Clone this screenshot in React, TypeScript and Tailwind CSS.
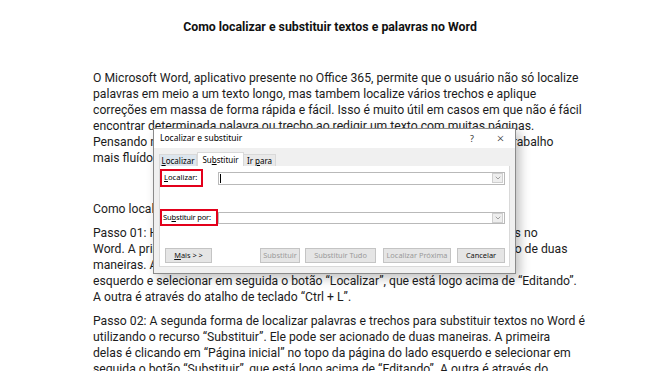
import { ChevronDown } from "lucide-react";

const p1 = [
  "O Microsoft Word, aplicativo presente no Office 365, permite que o usuário não só localize",
  "palavras em meio a um texto longo, mas tambem localize vários trechos e aplique",
  "correções em massa de forma rápida e fácil. Isso é muito útil em casos em que não é fácil",
  "encontrar determinada palavra ou trecho ao redigir um texto com muitas páginas.",
  "Pensando nisso, veja como localizar e substituir textos no Word e deixar seu trabalho",
  "mais fluído.",
];

const passo1 = [
  "Passo 01: Há duas formas de localizar palavras e trechos para substituir textos no",
  "Word. A primeira delas é utilizando o recurso “Localizar”. Ele pode ser acionado de duas",
  "maneiras. A primeira é clicando em “Página inicial” no topo da página do lado",
  "esquerdo e selecionar em seguida o botão “Localizar”, que está logo acima de “Editando”.",
  "A outra é através do atalho de teclado “Ctrl + L”.",
];

const passo2 = [
  "Passo 02: A segunda forma de localizar palavras e trechos para substituir textos no Word é",
  "utilizando o recurso “Substituir”. Ele pode ser acionado de duas maneiras. A primeira",
  "delas é clicando em “Página inicial” no topo da página do lado esquerdo e selecionar em",
  "seguida o botão “Substituir”, que está logo acima de “Editando”. A outra é através do",
];

const Lines = ({ lines }: { lines: string[] }) => (
  <p className="mb-2">
    {lines.map((l) => (
      <span key={l} className="block whitespace-nowrap">
        {l}
      </span>
    ))}
  </p>
);

const ComboBox = () => (
  <div className="flex h-full flex-1 items-center border border-[#b9b9b9] bg-white">
    <div className="flex-1" />
    <div className="mr-[1px] flex h-[10px] w-[11px] items-center justify-center border border-[#cfcfcf] bg-[#eeeeee] text-[#666]">
      <ChevronDown size={8} strokeWidth={1.75} />
    </div>
  </div>
);

const Btn = ({ children, off, w }: { children: React.ReactNode; off?: boolean; w: string }) => (
  <div
    className={`flex h-[15px] items-center justify-center whitespace-nowrap border border-[#c4c4c4] bg-[#e5e5e5] text-[7.4px] ${w} ${
      off ? "text-[#9a9a9a]" : "text-[#111]"
    }`}
  >
    {children}
  </div>
);

const Dialog = () => (
  <div
    className="absolute left-[153px] top-[128px] flex h-[146px] w-[363px] flex-col border border-[#8a8a8a] bg-[#f0f0f0] text-[7.6px] text-black shadow-[4px_4px_10px_rgba(0,0,0,0.25)]"
    style={{ fontFamily: '"Noto Sans", "Liberation Sans", sans-serif' }}
  >
    {/* title bar */}
    <div className="flex h-[19px] items-center bg-white pl-[6px] pr-[9px]">
      <span className="flex-1 text-[8.5px]">Localizar e substituir</span>
      <span className="w-[10px] text-center text-[9px] text-[#333]">?</span>
      <span className="ml-[18px] w-[11px] text-center text-[13px] font-light leading-none text-[#333]">×</span>
    </div>

    <div className="flex flex-1 flex-col px-[5px] pb-[6px] pt-[4px]">
      {/* tabs */}
      <div className="flex h-[14px] items-end whitespace-nowrap text-[8px]">
        <div className="flex h-[12px] w-[38px] items-center justify-center border border-b-0 border-[#d9d9d9] bg-[#dde6ee]">
          <span><u>L</u>ocalizar</span>
        </div>
        <div className="flex h-[14px] w-[47px] items-center justify-center border border-b-0 border-[#d9d9d9] bg-white">
          <span>Su<u>b</u>stituir</span>
        </div>
        <div className="flex h-[12px] w-[32px] items-center justify-center border border-b-0 border-l-0 border-[#d9d9d9] bg-[#e9e9e9]">
          <span>Ir <u>p</u>ara</span>
        </div>
      </div>

      {/* panel */}
      <div className="flex flex-1 flex-col border border-t-0 border-[#d9d9d9] bg-white pr-[4px] pt-[3px]">
        <div className="flex h-[18px] items-center">
          <div className="flex h-[18px] w-[43px] items-center whitespace-nowrap border-2 border-[#e3001b] pl-[2px]">
            <span><u>L</u>ocalizar:</span>
          </div>
          <div className="ml-[15px] flex h-[13px] flex-1">
            <div className="relative flex h-full flex-1">
              <ComboBox />
              <div className="absolute left-[2px] top-[2px] h-[9px] w-px bg-black" />
            </div>
          </div>
        </div>

        <div className="mt-[22px] flex h-[17px] items-center">
          <div className="flex h-[17px] w-[58px] items-center whitespace-nowrap border-2 border-[#e3001b] pl-[1px]">
            <span className="tracking-[-0.2px]">Su<u>b</u>stituir por:</span>
          </div>
          <div className="flex h-[12px] flex-1">
            <ComboBox />
          </div>
        </div>

        <div className="mt-[22px] flex items-center pl-[5px]">
          <Btn w="w-[47px]">
            <span><u>M</u>ais &gt; &gt;</span>
          </Btn>
          <div className="flex-1" />
          <Btn w="w-[40px]" off>Substituir</Btn>
          <div className="ml-[5px]">
            <Btn w="w-[71px]" off>Substituir Tudo</Btn>
          </div>
          <div className="ml-[7px]">
            <Btn w="w-[68px]" off>Localizar Próxima</Btn>
          </div>
          <div className="ml-[6px]">
            <Btn w="w-[48px]">Cancelar</Btn>
          </div>
        </div>
      </div>
    </div>
  </div>
);

export default function App() {
  return (
    <div
      className="relative h-[371px] w-[660px] overflow-hidden bg-white text-[#1c1c1c]"
      style={{ fontFamily: 'Roboto, "Liberation Sans", sans-serif' }}
    >
      <h1 className="pt-[19px] text-center text-[12.3px] font-bold leading-[16px] text-[#111]">
        Como localizar e substituir textos e palavras no Word
      </h1>

      <div className="pl-[93px] pt-[35px] text-[12.2px] leading-[16px]">
        <Lines lines={p1} />
        <p className="mb-2 h-[19px]" />
        <Lines lines={["Como localizar e substituir textos no Word"]} />
        <Lines lines={passo1} />
        <Lines lines={passo2} />
      </div>

      <Dialog />
    </div>
  );
}
